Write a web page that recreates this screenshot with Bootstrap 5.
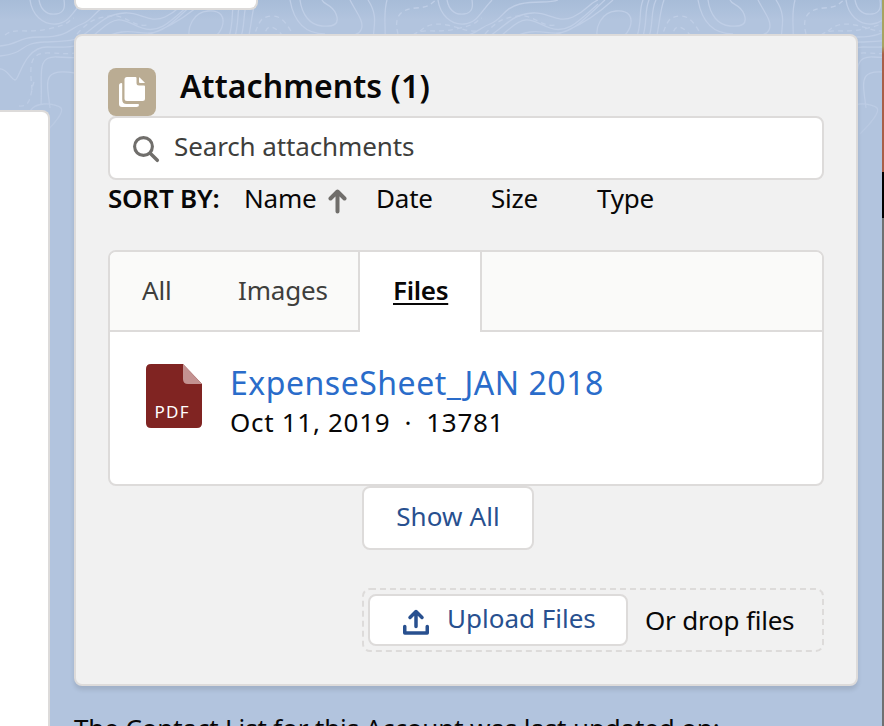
<!DOCTYPE html>
<html lang="en">
<head>
<meta charset="utf-8">
<title>Attachments</title>
<link href="https://cdn.jsdelivr.net/npm/bootstrap@5.3.0/dist/css/bootstrap.min.css" rel="stylesheet">
<style>
body{font-family:"Noto Sans",sans-serif;font-size:26px;line-height:36px;color:#080707;background:#b2c4de}
.stage{width:884px;height:726px;background:linear-gradient(#a7bcd8,#b2c4de 20px)}
.topo{width:882px;height:180px;z-index:0;top:0;left:0}
.side-panel{width:50px;margin-top:110px;background:#fff;border:2px solid #dddbda;border-width:2px 2px 0 0;border-top-right-radius:8px}
.main-col{width:784px;margin-left:24px}
.stub{width:184px;height:10px;border:2px solid #dddbda;border-top:0;border-radius:0 0 8px 8px;background:#fff}
.panel{height:652px;margin-top:24px;padding:32px;background:#f1f1f1;border:2px solid #dddbda;border-radius:8px;box-shadow:0 4px 4px rgba(0,0,0,.1)}
.edge{width:2px;margin-left:24px;background:linear-gradient(#a6a461 0,#a6a461 46px,#a85f48 54px,#a85f48 172px,#000 172px,#000 218px,#6e7172 218px)}
.panel-head{height:48px}
.panel-title{font-size:32px;font-weight:600;line-height:40px;margin:-2px 0 0 24px;letter-spacing:.08px}
.search{height:64px;border:2px solid #dddbda;border-radius:8px;color:#3e3e3c;padding-left:23px}
.search svg{margin-top:3px}
.search span{margin:-4px 0 0 14px;letter-spacing:-.12px}
.sorts{height:70px;letter-spacing:-.2px}
.sorts b{width:136px;font-weight:600}
.files{width:716px;height:236px;border:2px solid #dddbda;border-radius:8px}
.tabs{height:80px;background:#fafaf9;color:#3e3e3c;border-radius:6px 6px 0 0;letter-spacing:-.15px}
.tab-item{border-bottom:2px solid #dddbda;padding:0 0 1px 32px}
.tab-on{width:124px;background:#fff;border:2px solid #dddbda;border-width:0 2px;color:#080707;font-weight:600;padding:0 0 3px 33px;text-decoration:underline;text-decoration-thickness:2px;text-underline-offset:3px;letter-spacing:-.3px}
.tab-item span,.tab-on span{margin-top:-2px}
.file-row{padding:32px 0 0 36px}
.file-name{font-size:32px;line-height:38px;color:#2a6cca;text-decoration:none;letter-spacing:.52px}
.file-info{margin-left:28px}
.meta{margin-top:2px;letter-spacing:.7px}
.dot{width:36px;text-align:center}
.btn-lt{border:2px solid #dddbda;border-radius:8px;background:#fff;color:#28508f;font-size:26px;line-height:36px;padding:0}
.btn-lt:hover{background:#f4f6f9}
.show-all{width:172px;height:64px;margin-left:254px;padding-bottom:4px;letter-spacing:.1px}
.drop{width:462px;height:64px;margin:38px 0 0 254px;padding-left:6px}
.upload{width:260px;height:52px;margin-left:0}
.drop-label{margin-left:17px;letter-spacing:-.2px}
.foot{margin-top:24px;letter-spacing:-.14px}
</style>
</head>
<body>
<div class="stage position-relative overflow-hidden d-flex">
<svg class="topo position-absolute" viewBox="0 0 882 180">
<defs>
<linearGradient id="fade" x2="0" y2="1"><stop stop-color="#fff"/><stop offset=".5" stop-color="#fff"/><stop offset=".95" stop-color="#000"/></linearGradient>
<mask id="m"><rect width="882" height="180" fill="url(#fade)"/></mask>
<g id="tile">
<path d="M39 0C41 10 47 15 56 14S65 6 64 0M30 0C32 15 43 25 56 24S71 14 84 0M0 46C22 44 15 37 42 37S70 28 82 24S95 8 112 4 140 4 150 0M0 56C28 53 18 43 45 42S75 42 90 30 110 14 125 13 150 24 165 17 180 4 190 0M0 69C6 68 11 79 15 80S24 46 48 47 80 48 100 30 125 22 142 28 170 22 190 4M41 105C43 75 35 56 57 57S70 58 82 57M50 108C47 82 41 67 75 73M28 118C30 98 58 104 61 108S54 124 44 134M100 40C125 26 135 34 150 33S175 20 197 0M110 42C145 40 178 25 205 0M190 40C186 27 194 12 208 11S225 18 222 27 214 36 210 42M228 40C235 20 230 12 235 0M234 40C240 22 236 12 241 0M240 40C246 25 242 12 248 0M248 40C252 22 252 10 256 0M300 0C302 15 310 25 322 26S340 24 336 14 324 5 322 0M290 0C293 17 302 34 325 34M350 0C356 12 365 22 361 30S347 34 339 36M368 0C378 15 374 25 373 40M387 0C383 14 386 26 385 40"/>
<path stroke-dasharray="5 4" d="M5 35C15 27 24 34 48 29S68 20 74 18M32 90C30 66 28 52 50 53S70 54 80 52M19 106C32 108 30 92 34 82M77 34C90 20 95 18 111 16S135 30 150 24M252 40C260 22 259 17 272 16S292 34 297 42M264 40C265 25 271 22 283 36M398 34C393 15 402 9 416 8S429 5 436 0M414 38C425 23 435 23 447 25S465 32 479 31"/>
</g>
</defs>
<g mask="url(#m)" fill="none" stroke="#bfcee6" stroke-width="1.300"><use href="#tile"/><use href="#tile" x="408"/><use href="#tile" x="816"/></g>
</svg>
<aside class="side-panel position-relative flex-shrink-0"></aside>
<main class="main-col position-relative flex-shrink-0">
<div class="stub"></div>
<section class="panel">
<div class="panel-head d-flex align-items-start">
<svg class="flex-shrink-0" width="48" height="48" viewBox="0 0 48 48"><rect width="48" height="48" rx="8" fill="#baac93"/><g fill="#fff"><path d="M18.500 9H27.500q1 0 1 1v5q0 2.500 2.500 2.500h5q1 0 1 1V30.500q0 2.500-2.500 2.500h-15.500q-2.500 0-2.500-2.500V11.500q0-2.500 2.500-2.500z"/><path d="M31 9.600q0-.8.6-.2l5 5q.6.600-.2.600H32q-1 0-1-1z"/><path d="M13.500 15q.7 0 .7.800V31.500q0 4.500 4.500 4.500H30q1 0 1 1 0 2-2.500 2h-14.500q-3 0-3-3V17.500q0-2.500 2.500-2.500z"/></g></svg>
<h1 class="panel-title">Attachments (1)</h1>
</div>
<div class="search bg-white d-flex align-items-center">
<svg width="27" height="27" viewBox="0 0 27 27" fill="none" stroke="#706e6b"><circle cx="10.500" cy="10.500" r="8.900" stroke-width="3.100"/><path d="M17.200 17.200L24.300 24.300" stroke-width="3.500" stroke-linecap="round"/></svg>
<span>Search attachments</span>
</div>
<div class="sorts d-flex">
<b>SORT BY:</b><span style="width:84px">Name</span>
<svg width="19" height="25" viewBox="0 0 19 25" style="margin:9px 29px 0 0" fill="none" stroke="#706e6b" stroke-width="4" stroke-linecap="round" stroke-linejoin="round"><path d="M9.500 22.500V3M2.500 9.500l7-7 7 7"/></svg>
<span style="width:115px">Date</span><span style="width:106px">Size</span><span>Type</span>
</div>
<div class="files bg-white">
<div class="tabs d-flex">
<div class="tab-item d-flex align-items-center" style="width:96px"><span>All</span></div>
<div class="tab-item d-flex align-items-center" style="width:152px"><span>Images</span></div>
<div class="tab-on d-flex align-items-center"><span>Files</span></div>
<div class="tab-item flex-grow-1"></div>
</div>
<div class="file-row d-flex">
<svg width="56" height="64" viewBox="0 0 56 64"><path d="M5 0H37L56 20V59q0 5-5 5H5q-5 0-5-5V5q0-5 5-5z" fill="#802422"/><path d="M37 0L56 20H42q-5 0-5-5z" fill="#c39291"/><text x="8.500" y="54" font-size="17" fill="#fff" textLength="34">PDF</text></svg>
<div class="file-info"><a class="file-name d-block" href="#">ExpenseSheet_JAN 2018</a><div class="meta d-flex"><span>Oct 11, 2019</span><span class="dot">·</span><span>13781</span></div></div>
</div>
</div>
<button class="btn btn-lt show-all d-block">Show All</button>
<div class="drop position-relative d-flex align-items-center">
<svg class="position-absolute top-0 start-0" width="462" height="64"><rect x="1" y="1" width="460" height="62" rx="7" fill="none" stroke="#dddbda" stroke-width="2" stroke-dasharray="6 4"/></svg>
<button class="btn btn-lt upload position-relative d-flex align-items-center">
<svg width="26" height="26" viewBox="0 0 26 26" style="margin:4px 0 0 33px" fill="none" stroke="#28508f" stroke-width="3.500" stroke-linecap="round" stroke-linejoin="round"><path d="M13 17.500V3M7 8.500L13 2.500l6 6M1.750 17.500v6.500h22.500v-6.500"/></svg>
<span style="margin:-4px 0 0 18px">Upload Files</span></button>
<span class="drop-label">Or drop files</span>
</div>
</section>
<p class="foot text-nowrap">The Contact List for this Account was last updated on:</p>
</main>
<div class="edge flex-shrink-0"></div>
</div>
<script src="https://cdn.jsdelivr.net/npm/bootstrap@5.3.0/dist/js/bootstrap.bundle.min.js"></script>
</body>
</html>
